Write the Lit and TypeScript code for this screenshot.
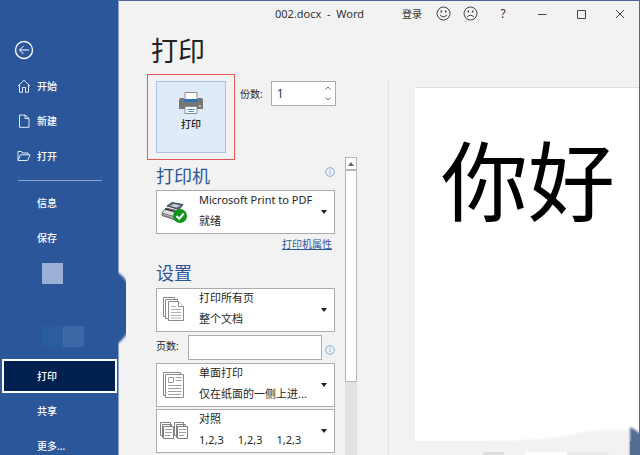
import { LitElement, html, css, svg, nothing } from "lit";
import { customElement, property, state } from "lit/decorators.js";
import { classMap } from "lit/directives/class-map.js";

const homeIcon = svg`<path d="M1 7 7 1.200l6 5.800M2.500 6v7.300H5.500V8.500h3v4.800h3V6"/>`;
const fileIcon = svg`<path d="M2.500 1h5.500l4 3.500V13.300H2.500zM8 1v3.500h4"/>`;
const folderIcon = svg`<path d="M1 11.500V2.500h3.500l1 1.500h5.500v1.800M1 11.500 3.500 5.800h9.700l-2.700 5.700z"/>`;

const pagesIcon = html`<svg width="28" height="28" viewBox="0 0 28 28" fill="#fff" stroke="#8a8a8a">
  <path d="M3.500 1.500h11v19h-11z"/><path d="M5.500 3.500h12v19h-12z"/>
  <path d="M8.500 5.500h10l5 5v14h-15z"/><path d="M18.500 5.500v5h5" />
  <path stroke="#b0b0b0" d="M11 10.500h5M11 13.500h10M11 16.500h10M11 19.500h10M11 22h10"/></svg>`;
const sideIcon = html`<svg width="28" height="28" viewBox="0 0 28 28" fill="#fff" stroke="#8a8a8a">
  <path d="M3.500 1.500h17v23h-17z"/><path d="M5.500 3.500h18v23h-18z"/>
  <path stroke="#a0a0a0" d="M8.500 6.500h5v5h-5zM15.500 6.500h6M15.500 9.500h6M8 14.500h13.500M8 17.500h13.500M8 20.500h13.500M8 23.500h13.500"/></svg>`;
const collateIcon = html`<svg width="28" height="28" viewBox="0 0 28 28" fill="#fff" stroke="#808080">
  <path d="M.5 5.500h10v13h-10zM2.500 7.500h9v13h-9z"/><path d="M3.500 9.500h10v12h-10z"/>
  <path d="M14.500 5.500h9v13h-9zM16.500 7.500h9v13h-9z"/><path d="M17.500 9.500h10v12h-10z"/>
  <path stroke="#a0a0a0" d="M5 12.500h7M5 15.500h7M5 18.500h5M19 12.500h7M19 15.500h7M19 18.500h5"/></svg>`;
const deviceIcon = html`<svg width="28" height="28" viewBox="0 0 28 28">
  <path d="M7 8 12 4.500l11 2-4 5z" fill="#64717c" stroke="#444"/>
  <path d="M10 8l4-2 6 1.500-3 2z" fill="#c3d3df"/>
  <path d="M2 15l4-5 13 3-4 6z" fill="#dedede" stroke="#666"/>
  <path d="M5 11l12 3" stroke="#333" stroke-width="1.600"/>
  <path d="M2 15.500v2l12 4v-2" fill="#999" stroke="#666"/>
  <circle cx="20" cy="18" r="7" fill="#12941c"/>
  <path d="M16.500 18l2.700 2.800 4.500-5.300" fill="none" stroke="#fff" stroke-width="2"/></svg>`;
const infoIcon = html`<svg width="10" height="10" viewBox="0 0 10 10" fill="none" stroke="#7fa9dc">
  <circle cx="5" cy="5" r="4.300"/><path d="M5 4.200v3.300M5 2.300v1.100"/></svg>`;

@customElement("choice-card")
class ChoiceCard extends LitElement {
  @property() label = "";
  @property() value = "";
  @property({ attribute: false }) icon: unknown = nothing;
  @property({ attribute: false }) detail: string[] = [];

  static styles = css`
    :host { display: block; }
    .card {
      display: grid; grid-template: 20px 22px / 42px 1fr 20px;
      background: #fff; border: 1px solid #ababab; color: #262626;
    }
    .pick {
      grid-area: 1 / 1 / 3 / 4; appearance: none; border: 0; background: none;
      font: inherit; color: inherit; min-width: 0; margin: 0; padding: 0 0 24px 42px;
    }
    .icon { grid-area: 1 / 1 / 3 / 2; place-self: center start; margin-left: 3px; height: 28px; pointer-events: none; }
    .detail { grid-area: 2 / 2 / 3 / 3; display: flex; gap: 14px; line-height: 20px; white-space: nowrap; pointer-events: none; }
    .arrow { grid-area: 1 / 3 / 3 / 4; place-self: center; width: 6px; height: 4px; pointer-events: none; }
  `;

  render() {
    return html`<div class="card">
      <select class="pick" aria-label=${this.label}><option>${this.value}</option></select>
      <span class="icon">${this.icon}</span>
      <span class="detail">${this.detail.map((d) => html`<span>${d}</span>`)}</span>
      <svg class="arrow" viewBox="0 0 6 4"><path d="M0 0h6L3 4z" fill="#222"/></svg>
    </div>`;
  }
}

@customElement("side-nav")
class SideNav extends LitElement {
  @property() current = "打印";

  static styles = css`
    :host {
      position: relative; display: flex; flex-direction: column; width: 118px; flex: none;
      background: #2b579a; border-right: 1px solid #8ba4cc; color: #fff; font-weight: 500;
    }
    .back { margin: 40px 0 0 14px; padding: 0; width: 20px; height: 20px; border: 0; background: none; }
    .back svg, .glyph { display: block; }
    ul { list-style: none; margin: 0; padding: 0; display: flex; flex-direction: column; gap: 1px; }
    .top { margin-top: 9px; }
    hr { width: 84px; margin: 7px 0 5px 18px; border: 0; border-top: 1px solid #8da8d3; }
    a {
      display: grid; grid-template-columns: 14px 1fr; gap: 6px; align-items: center;
      height: 34px; box-sizing: border-box; padding-left: 17px; color: inherit; text-decoration: none;
    }
    .label { grid-column: 2; }
    .current { margin-right: 1px; margin-left: 2px; padding-left: 13px; background: #00204f; border: 2px solid #fff; }
    .masked { display: flex; flex-direction: column; justify-content: space-between; height: 84px; padding: 7px 0 11px 42px; }
    .tile { width: 21px; height: 21px; background: #9bb0d5; }
    .pair { display: flex; }
    .pair .tile { background: #2b5c9b; }
    .pair .tile + .tile { background: #3b68a6; }
    .bulge { position: absolute; left: 112px; top: 266px; }
  `;

  private item(label: string, icon?: unknown) {
    const on = label === this.current;
    return html`<li><a href="#" class=${classMap({ current: on })} aria-current=${on ? "page" : nothing}>
      ${icon ? html`<svg class="glyph" width="14" height="14" viewBox="0 0 14 14" fill="none" stroke="#e3eaf5">${icon}</svg>` : nothing}
      <span class="label">${label}</span></a></li>`;
  }

  render() {
    return html`
      <button class="back" aria-label="返回">
        <svg width="20" height="20" viewBox="0 0 20 20" fill="none" stroke="#fff">
          <circle cx="10" cy="10" r="8.500" stroke-width="1.300"/><path d="M15 10H5.500M9.500 6 5.500 10l4 4"/></svg>
      </button>
      <ul class="top">
        ${this.item("开始", homeIcon)}${this.item("新建", fileIcon)}${this.item("打开", folderIcon)}
      </ul>
      <hr />
      <ul>
        ${this.item("信息")}${this.item("保存")}
        <li class="masked" aria-hidden="true">
          <div class="tile"></div>
          <div class="pair"><div class="tile"></div><div class="tile"></div></div>
        </li>
        ${this.item("打印")}${this.item("共享")}${this.item("更多...")}
      </ul>
      <svg class="bulge" width="14" height="84" viewBox="0 0 14 84">
        <defs><filter id="soft" x="-50%" width="200%"><feGaussianBlur stdDeviation="1"/></filter></defs>
        <path d="M-4 6h9Q11 9 16 18V66Q11 74 5 78H-4z" fill="#2b579a" filter="url(#soft)"/>
      </svg>`;
  }
}

@customElement("title-bar")
class TitleBar extends LitElement {
  static styles = css`
    :host { display: flex; align-items: center; height: 25px; color: #333; }
    .name { flex: 1; text-align: right; white-space: pre; font-size: 11px; }
    .tools { display: flex; align-items: center; margin-left: 38px; }
    button { border: 0; background: none; padding: 0; font: inherit; color: inherit; display: grid; place-items: center; }
    .face { width: 27px; height: 16px; }
    .help { width: 38px; font-size: 12px; }
    .win { width: 39px; height: 16px; }
    .sign { margin-right: 8px; }
  `;
  render() {
    const face = (mouth: string) => html`<svg width="15" height="15" viewBox="0 0 15 15" fill="none" stroke="#444">
      <circle cx="7.500" cy="7.500" r="6.500"/><path d=${mouth}/><path stroke-width="1.500" d="M5.300 4.500v2M9.700 4.500v2"/></svg>`;
    const sys = (d: string) => html`<svg width="10" height="10" viewBox="0 0 10 10" fill="none" stroke="#444"><path d=${d}/></svg>`;
    return html`
      <span class="name">002.docx  -  Word</span>
      <div class="tools">
        <button class="sign">登录</button>
        <button class="face" aria-label="微笑">${face("M4 9q3.500 3.500 7 0")}</button>
        <button class="face" aria-label="哭脸">${face("M4 11q3.500-3.500 7 0")}</button>
        <button class="help" aria-label="帮助">?</button>
        <button class="win" aria-label="最小化">${sys("M1 5.500h8.500")}</button>
        <button class="win" aria-label="最大化">${sys("M1.500 1.500h8v8h-8z")}</button>
        <button class="win" aria-label="关闭">${sys("M1 1l8 8M9 1l-8 8")}</button>
      </div>`;
  }
}

@customElement("print-panel")
class PrintPanel extends LitElement {
  @state() private copies = 1;

  static styles = css`
    :host { display: flex; flex-direction: column; min-height: 0; color: #262626; }
    h1, h2 { margin: 0; font-weight: 400; }
    h1 { padding-left: 32px; font-size: 27px; line-height: 36px; height: 48px; color: #222; }
    .job { display: flex; align-items: flex-start; gap: 14px; padding-left: 37px; height: 76px; }
    .print {
      position: relative; width: 70px; height: 72px; padding: 0 0 10px; background: #e0ebf9; border: 1px solid #a8c3e3;
      font: inherit; font-weight: 500; color: #222; display: flex; flex-direction: column; align-items: center; justify-content: center;
    }
    .print::after { content: ""; position: absolute; inset: -8px -10px -8px -10px; border: 1px solid #e4585a; }
    .copies { display: flex; align-items: center; gap: 8px; }
    .spin { display: flex; width: 65px; height: 25px; box-sizing: border-box; background: #fff; border: 1px solid #ababab; }
    input { font: inherit; color: inherit; box-sizing: border-box; border: 0; min-width: 0; margin: 0; }
    .spin input { flex: 1; width: 40px; padding: 0 5px; background: none; appearance: textfield; font-size: 12px; color: #1f3764; }
    .spin input::-webkit-inner-spin-button { appearance: none; }
    .steps { display: flex; flex-direction: column; width: 14px; }
    .steps button { flex: 1; border: 0; padding: 0; background: none; display: grid; place-items: center; }
    .scroller { display: flex; flex: 1; min-height: 0; overflow: hidden; }
    .body { width: 179px; margin: 5px 10px 0 37px; display: flex; flex-direction: column; flex: none; }
    .head { display: flex; justify-content: space-between; height: 28px; }
    h2 { font-size: 18px; line-height: 28px; color: #2b579a; }
    .info { height: 10px; display: block; }
    .head .info { margin-top: 3px; }
    .more { align-self: flex-end; margin: 0 3px 4px 0; line-height: 20px; color: #2b579a; font-size: 10px; }
    .set h2 { line-height: 30px; }
    .card { font-size: 11px; }
    .pages { display: flex; align-items: center; height: 25px; margin: 3px 0; }
    .pages label { width: 32px; margin-top: -3px; }
    .pages input { flex: 1; height: 25px; background: #fff; border: 1px solid #ababab; }
    .pages .info { margin-left: 3px; }
    .last { margin-top: 2px; }
    .bar { width: 12px; flex: none; display: flex; flex-direction: column; background: #e3e3e3; }
    .bar button { height: 13px; padding: 0; display: grid; place-items: center; }
    .bar button, .thumb { box-sizing: border-box; background: #fff; border: 1px solid #b5b5b5; }
    .thumb { height: 212px; }
  `;

  private step(n: number) {
    this.copies = Math.max(1, this.copies + n);
  }

  render() {
    return html`
      <h1>打印</h1>
      <div class="job">
        <button class="print">
          <svg width="26" height="24" viewBox="0 0 26 24">
            <path d="M7 .5h12v8H7z" fill="#fff" stroke="#8a8a8a"/>
            <path d="M1 8q0-2 2-2h3v4h14V6h3q2 0 2 2v9H1z" fill="#777"/>
            <path d="M6 7h14v3H6z" fill="#2e75b6"/>
            <path d="M21 14h2" stroke="#fff"/>
            <path d="M7 14.500h12v7H7z" fill="#fff" stroke="#8a8a8a"/>
            <path d="M9 17.500h8M10 19.500h6" stroke="#5b9bd5"/>
          </svg>
          <span>打印</span>
        </button>
        <div class="copies">
          <label for="copies">份数:</label>
          <div class="spin">
            <input id="copies" type="number" min="1" .value=${String(this.copies)} />
            <div class="steps">
              <button aria-label="增加" @click=${() => this.step(1)}>
                <svg width="6" height="4" fill="none" stroke="#777"><path d="M.5 3.500 3 1l2.500 2.500"/></svg></button>
              <button aria-label="减少" @click=${() => this.step(-1)}>
                <svg width="6" height="4" fill="none" stroke="#777"><path d="M.5.5 3 3 5.500.5"/></svg></button>
            </div>
          </div>
        </div>
      </div>
      <div class="scroller">
        <div class="body">
          <div class="head"><h2>打印机</h2><span class="info">${infoIcon}</span></div>
          <choice-card class="card" label="打印机" value="Microsoft Print to PDF" .icon=${deviceIcon} .detail=${["就绪"]}></choice-card>
          <a class="more" href="#">打印机属性</a>
          <div class="set"><h2>设置</h2></div>
          <choice-card class="card" label="打印范围" value="打印所有页" .icon=${pagesIcon} .detail=${["整个文档"]}></choice-card>
          <div class="pages"><label for="pages">页数:</label><input id="pages" type="text" /><span class="info">${infoIcon}</span></div>
          <choice-card class="card" label="单双面" value="单面打印" .icon=${sideIcon} .detail=${["仅在纸面的一侧上进..."]}></choice-card>
          <choice-card class="card last" label="排序" value="对照" .icon=${collateIcon} .detail=${["1,2,3", "1,2,3", "1,2,3"]}></choice-card>
        </div>
        <div class="bar">
          <button aria-label="向上滚动"><svg width="6" height="4"><path d="M0 4h6L3 0z" fill="#666"/></svg></button>
          <div class="thumb"></div>
        </div>
      </div>`;
  }
}

@customElement("page-preview")
class PagePreview extends LitElement {
  static styles = css`
    :host { position: relative; display: flex; flex-direction: column; min-width: 0; border-left: 1px solid #e2e2e2; }
    .sheet {
      flex: 1; margin: 6px 0 14px 26px; background: #fff; border-top: 1px solid #dedede;
      padding: 38px 0 0 26px; overflow: hidden; font-size: 87px; line-height: 110px; color: #000; white-space: nowrap;
    }
    .status { position: absolute; right: 30px; bottom: 0; display: flex; height: 3px; }
    .chip { width: 21px; margin-right: 21px; background: #dedede; }
    .chip.wide { width: 42px; margin: 0; background: #fdfdfd; }
    .chip.dim { background: #ebebeb; }
    .wave { position: absolute; right: 0; bottom: 0; }
  `;
  render() {
    return html`
      <div class="sheet">你好</div>
      <svg class="wave" width="150" height="32" viewBox="0 0 150 32">
        <defs><filter id="edge"><feGaussianBlur stdDeviation="1.200"/></filter></defs>
        <path d="M0 18Q50 18 80 12T125 7H141V32H0z" fill="#f2f2f2" filter="url(#edge)"/>
        <path d="M141 18h9v14h-9z" fill="#566d93"/>
        <path d="M141 4Q146 6 155 14V40H141z" fill="#566d93" filter="url(#edge)"/>
      </svg>
      <div class="status"><span class="chip"></span><span class="chip wide"></span><span class="chip wide dim"></span></div>`;
  }
}

@customElement("app-root")
class AppRoot extends LitElement {
  static styles = css`
    :host {
      display: flex; height: 100vh; overflow: hidden; background: #f2f2f2;
      font: 10px/16px "Noto Sans", "Noto Sans CJK SC", sans-serif;
    }
    .window {
      flex: 1; min-width: 0; display: grid; grid-template: auto minmax(0, 1fr) / 269px minmax(0, 1fr);
      border-top: 1px solid #4a6596; border-right: 1px solid #4a6b97;
    }
    .title { grid-column: 1 / 3; }
    .panel { padding-top: 7px; }
    .preview { margin-top: 55px; }
  `;
  render() {
    return html`
      <side-nav></side-nav>
      <div class="window">
        <title-bar class="title"></title-bar>
        <print-panel class="panel"></print-panel>
        <page-preview class="preview"></page-preview>
      </div>`;
  }
}
